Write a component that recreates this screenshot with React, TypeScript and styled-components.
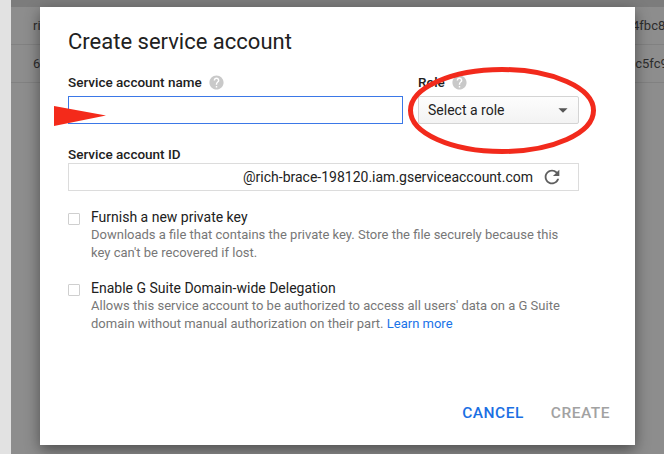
import styled, { createGlobalStyle } from "styled-components";
import { MdHelp, MdRefresh, MdArrowDropDown } from "react-icons/md";

const GlobalStyle = createGlobalStyle`
  body {
    margin: 0;
    font-family: Roboto, "Liberation Sans", Arial, sans-serif;
  }
`;

const Page = styled.div`
  position: relative;
  display: flex;
  width: 664px;
  height: 454px;
  overflow: hidden;
  background-color: #8d8d8d;
`;

const LeftRail = styled.div`
  width: 11px;
  background-color: #e2e2e2;
`;

const Backdrop = styled.div`
  flex: 1;
  display: flex;
  flex-direction: column;
`;

const TopBand = styled.div`
  height: 7px;
  background-color: #7c7c7c;
`;

const TableRow = styled.div`
  display: flex;
  align-items: center;
  justify-content: space-between;
  height: 37px;
  padding-left: 22px;
  border-bottom: 1px solid #818181;
  font-size: 13px;
  color: #2c2c2c;
`;

const Cell = styled.span<{ $tail?: boolean }>`
  white-space: nowrap;
  overflow: hidden;
  width: ${(props) => (props.$tail ? "32px" : "auto")};
`;

const Dialog = styled.div`
  position: absolute;
  left: 40px;
  top: 7px;
  width: 595px;
  height: 438px;
  box-sizing: border-box;
  padding: 22px 25px 23px 28px;
  display: flex;
  flex-direction: column;
  background-color: #fff;
  box-shadow: 0 5px 14px rgba(0, 0, 0, 0.45);
`;

const Title = styled.h1`
  margin: 0;
  font-size: 22px;
  line-height: 26px;
  font-weight: 400;
  color: #212121;
`;

const Form = styled.div`
  width: 511px;
  margin-top: 18px;
`;

const FieldRow = styled.div`
  display: flex;
  gap: 15px;
`;

const Field = styled.div<{ $width: number }>`
  width: ${(props) => props.$width}px;
  display: flex;
  flex-direction: column;
`;

const Label = styled.div<{ $gap: number; $top?: number }>`
  display: flex;
  align-items: center;
  gap: 6px;
  height: 18px;
  margin-top: ${(props) => props.$top || 0}px;
  margin-bottom: ${(props) => props.$gap}px;
  font-size: 13.5px;
  font-weight: 500;
  color: #212121;
  svg {
    color: #c9c9c9;
  }
`;

const TextInput = styled.div`
  height: 28px;
  box-sizing: border-box;
  border: 1px solid #3b78e7;
  background-color: #fff;
`;

const Select = styled.div`
  height: 28px;
  box-sizing: border-box;
  display: flex;
  align-items: center;
  justify-content: space-between;
  padding: 0 4px 0 9px;
  border: 1px solid #d4d4d4;
  border-radius: 2px;
  background: linear-gradient(#fdfdfd, #f3f3f3);
  font-size: 14px;
  color: #222;
  svg {
    color: #555;
  }
`;

const IdBox = styled.div`
  height: 28px;
  box-sizing: border-box;
  display: flex;
  align-items: center;
  border: 1px solid #dcdcdc;
  padding-right: 15px;
  font-size: 14px;
  color: #222;
  svg {
    color: #5f5f5f;
    margin-left: auto;
  }
`;

const IdInput = styled.div`
  width: 174px;
  align-self: stretch;
`;

const Options = styled.div`
  display: flex;
  flex-direction: column;
  gap: 18px;
  margin-top: 17px;
`;

const Option = styled.div`
  display: flex;
  gap: 11px;
  width: 500px;
`;

const Checkbox = styled.div`
  flex: none;
  width: 12px;
  height: 12px;
  margin-top: 5px;
  box-sizing: border-box;
  border: 1px solid #cfcfcf;
  border-radius: 1px;
`;

const OptionTitle = styled.div`
  font-size: 14px;
  line-height: 18px;
  color: #212121;
`;

const OptionText = styled.div`
  font-size: 13px;
  line-height: 17.5px;
  color: #777;
  a {
    color: #1a73e8;
    text-decoration: none;
  }
`;

const Footer = styled.div`
  display: flex;
  justify-content: flex-end;
  gap: 27px;
  margin-top: auto;
`;

const FlatButton = styled.button<{ $disabled?: boolean }>`
  border: 0;
  padding: 0;
  background: none;
  font-family: inherit;
  font-size: 15.5px;
  line-height: 18px;
  letter-spacing: 0.5px;
  font-weight: 500;
  color: ${(props) => (props.$disabled ? "#a2a2a2" : "#1a6fe3")};
`;

const Markup = styled.svg`
  position: absolute;
  left: 0;
  top: 0;
  pointer-events: none;
`;

const rows = [
  { left: "rich-brace-198120", right: "4fbc8e2a" },
  { left: "6", right: "lc5fc91d" },
];

const App = () => {
  return (
    <Page>
      <GlobalStyle />
      <LeftRail />
      <Backdrop>
        <TopBand />
        {rows.map((row, idx) => (
          <TableRow key={"row" + idx}>
            <Cell>{row.left}</Cell>
            <Cell $tail>{row.right}</Cell>
          </TableRow>
        ))}
      </Backdrop>
      <Dialog>
        <Title>Create service account</Title>
        <Form>
          <FieldRow>
            <Field $width={335}>
              <Label $gap={5}>
                Service account name <MdHelp size={17} />
              </Label>
              <TextInput />
            </Field>
            <Field $width={161}>
              <Label $gap={5}>
                Role <MdHelp size={17} />
              </Label>
              <Select>
                Select a role
                <MdArrowDropDown size={22} />
              </Select>
            </Field>
          </FieldRow>
          <Label $gap={0} $top={21}>
            Service account ID
          </Label>
          <IdBox>
            <IdInput />
            @rich-brace-198120.iam.gserviceaccount.com
            <MdRefresh size={22} />
          </IdBox>
          <Options>
            <Option>
              <Checkbox />
              <div>
                <OptionTitle>Furnish a new private key</OptionTitle>
                <OptionText>
                  Downloads a file that contains the private key. Store the
                  file securely because this key can't be recovered if lost.
                </OptionText>
              </div>
            </Option>
            <Option>
              <Checkbox />
              <div>
                <OptionTitle>Enable G Suite Domain-wide Delegation</OptionTitle>
                <OptionText>
                  Allows this service account to be authorized to access all
                  users' data on a G Suite domain without manual authorization
                  on their part. <a href="#">Learn more</a>
                </OptionText>
              </div>
            </Option>
          </Options>
        </Form>
        <Footer>
          <FlatButton>CANCEL</FlatButton>
          <FlatButton $disabled>CREATE</FlatButton>
        </Footer>
      </Dialog>
      <Markup width="664" height="454">
        <ellipse
          cx="502"
          cy="110.5"
          rx="91.5"
          ry="41"
          fill="none"
          stroke="#f22a1c"
          strokeWidth="5"
        />
        <polygon points="54,106 106,115.5 54,126" fill="#f42a1a" />
      </Markup>
    </Page>
  );
};

export default App;
